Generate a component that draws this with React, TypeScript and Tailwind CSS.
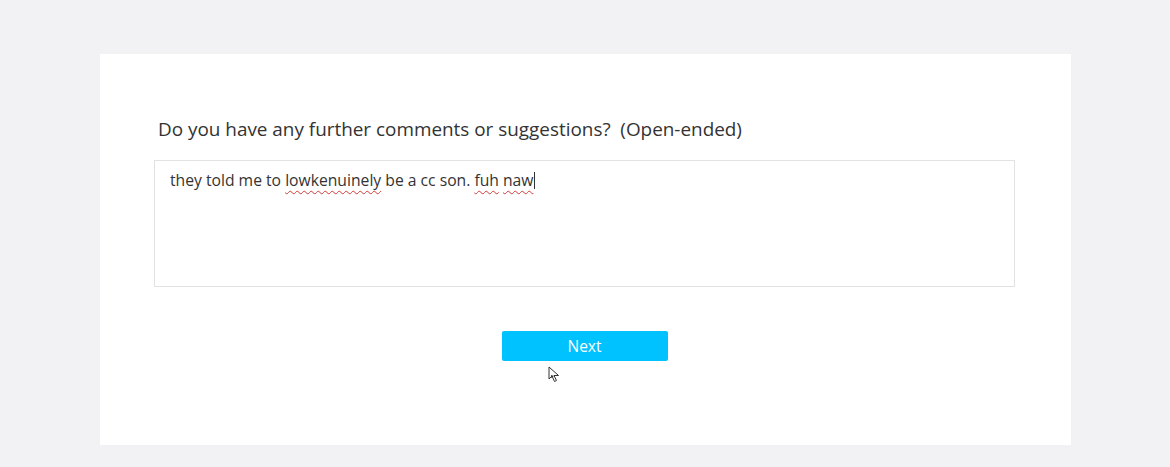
import React from 'react';

const Misspelled: React.FC<{ children: React.ReactNode }> = ({ children }) => (
    <span className="underline decoration-wavy decoration-[#d23b3b] decoration-1 underline-offset-[4px]">{children}</span>
);

const Cursor: React.FC = () => (
    <svg className="absolute left-[548px] top-[366px]" width="13" height="17" viewBox="0 0 13 17">
        <path d="M1 1 L1 13 L4 10 L6.5 15.5 L8.5 14.5 L6 9.5 L10.5 9.5 Z" fill="#ffffff" stroke="#333" strokeWidth="1" strokeLinejoin="round" />
        <path d="M3 9 L3 12 L6 10 Z" fill="#333" />
    </svg>
);

const App: React.FC = () => {
    return (
        <div className="min-h-[467px] bg-[#f2f1f4] pt-[54px] pb-[22px] relative" style={{ fontFamily: '"Open Sans", "Noto Sans", sans-serif' }}>
            <div className="mx-[100px] w-[971px] h-[391px] bg-white pl-[54px] pr-[56px] pt-[62px] flex flex-col">
                <h2 className="ml-[4px] text-[18.9px] leading-[26px] text-[#333333] whitespace-pre">
                    Do you have any further comments or suggestions?  (Open-ended)
                </h2>
                <div className="mt-[18px] h-[127px] border border-[#e2e2e2] px-[15px] pt-[8px] text-[15.7px] leading-[22px] text-[#333333]">
                    they told me to <Misspelled>lowkenuinely</Misspelled> be a cc son. <Misspelled>fuh</Misspelled> <Misspelled>naw</Misspelled>
                    <span className="inline-block w-px h-[17px] bg-[#333] align-[-3px]" />
                </div>
                <div className="flex justify-center mt-[44px]">
                    <button className="w-[166px] h-[30px] bg-[#00c2ff] rounded-[2px] text-white text-[15.5px] leading-none pt-[2px]">
                        Next
                    </button>
                </div>
            </div>
            <Cursor />
        </div>
    );
};

export default App;
